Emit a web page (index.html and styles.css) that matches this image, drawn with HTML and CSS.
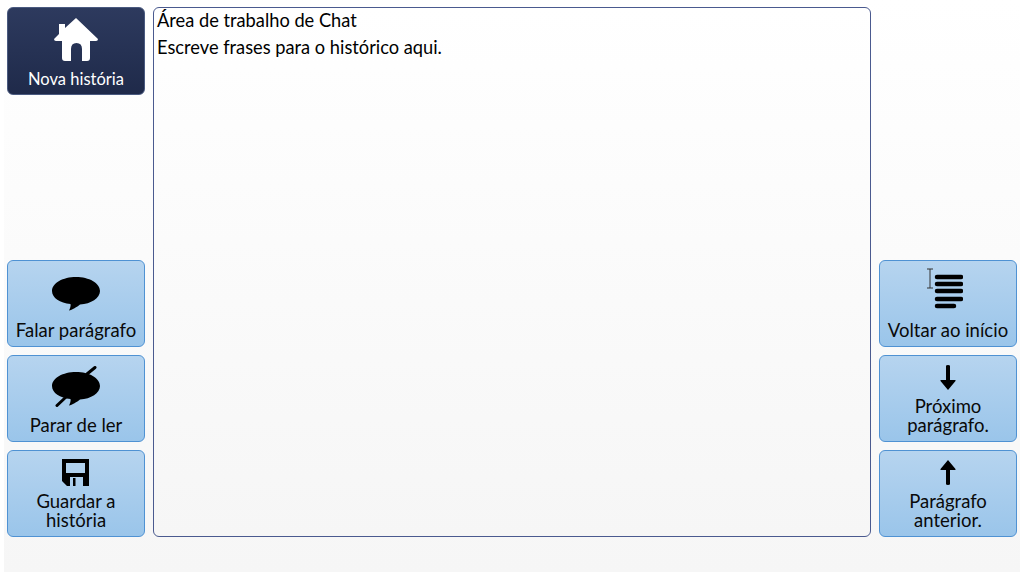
FILE: index.html
```html
<!DOCTYPE html>
<html lang="pt">
  <head>
    <meta charset="UTF-8" />
    <title>Área de trabalho de Chat</title>
    <link rel="stylesheet" href="styles.css">
  </head>
  <body>
    <div class="screen">
      <div class="side">
        <button class="btn btn-dark">
          <svg class="icon" width="44" height="44" viewBox="0 0 44 44">
            <path fill="#fff" d="M22 0 L44 21 Q44 23 42 23 H36 V40 Q36 43 33 43 H28 V31 Q28 25 22.500 25 Q17 25 17 31 V43 H11 Q8 43 8 40 V23 H2 Q0 23 0 21 L5 16 V6 H11 V10 Z"/>
          </svg>
          <span class="label">Nova história</span>
        </button>
        <div class="spacer"></div>
        <button class="btn btn-talk">
          <svg class="icon" width="48" height="34" viewBox="0 0 48 34">
            <path d="M24 0 C37 0 48 6 48 14 C48 21 39 27 28 27.500 C25 30 20 33 17 33.500 C18 31.500 19 29 18.500 27 C8 26 0 21 0 14 C0 6 11 0 24 0 Z"/>
          </svg>
          <span class="label">Falar parágrafo</span>
        </button>
        <button class="btn btn-stop">
          <svg class="icon" width="48" height="41" viewBox="0 0 48 41">
            <path d="M24 6 C37 6 48 12 48 20 C48 27 39 33 28 33.500 C25 36 20 39 17 39.500 C18 37.500 19 35 18.500 33 C8 32 0 27 0 20 C0 12 11 6 24 6 Z"/>
            <path d="M5 39.500 L14 31 M35 8 L43 1.500" stroke="#000" stroke-width="3" stroke-linecap="round"/>
          </svg>
          <span class="label">Parar de ler</span>
        </button>
        <button class="btn btn-two">
          <svg class="icon" width="28" height="28" viewBox="0 0 28 28">
            <path fill-rule="evenodd" d="M0 0 H27 V27 H21 V18 H8 V27 H5 L0 22 Z M4 4 V14 H23 V4 Z M11 19 H13.500 V27 H11 Z"/>
          </svg>
          <span class="label">Guardar a<br>história</span>
        </button>
      </div>

      <div class="chat">
        <p>Área de trabalho de Chat</p>
        <p>Escreve frases para o histórico aqui.</p>
      </div>

      <div class="side">
        <div class="spacer"></div>
        <button class="btn btn-top">
          <svg class="icon icon-left" width="36" height="42" viewBox="0 0 36 42">
            <path d="M0 1 H6 M3 1 V20 M0 20 H6" stroke="#333" stroke-width="1" fill="none"/>
            <path d="M10 9 H34 M10 16 H34 M10 23 H34 M10 31 H34 M10 38 H27" stroke="#000" stroke-width="4.500" stroke-linecap="round"/>
          </svg>
          <span class="label">Voltar ao início</span>
        </button>
        <button class="btn btn-arrow">
          <svg class="icon" width="16" height="26" viewBox="0 0 16 26">
            <path d="M6 1 Q6 0 8 0 Q10 0 10 1 V15 H15 Q16 15 15.500 16 L8 25 L0.500 16 Q0 15 1 15 H6 Z"/>
          </svg>
          <span class="label">Próximo<br>parágrafo.</span>
        </button>
        <button class="btn btn-arrow">
          <svg class="icon" width="16" height="26" viewBox="0 0 16 26">
            <path d="M6 24 Q6 25 8 25 Q10 25 10 24 V10 H15 Q16 10 15.500 9 L8 0 L0.500 9 Q0 10 1 10 H6 Z"/>
          </svg>
          <span class="label">Parágrafo<br>anterior.</span>
        </button>
      </div>
    </div>
  </body>
</html>
```

FILE: styles.css
```css
* {
  margin: 0;
  padding: 0;
  box-sizing: border-box;
  font-family: 'Lato', 'Noto Sans', sans-serif;
}
body {
  width: 1024px;
  height: 576px;
  background: #fff;
  padding: 0 4px 4px;
  overflow: hidden;
}
.screen {
  height: 572px;
  padding: 7px 3px 35px;
  background: linear-gradient(#fff, #f6f6f6);
  display: flex;
  gap: 8px;
}
.side {
  width: 138px;
  display: flex;
  flex-direction: column;
  gap: 8px;
}
.spacer {
  flex: 1;
}
.btn {
  width: 100%;
  height: 87px;
  flex-shrink: 0;
  border: 1px solid #4f92d3;
  border-radius: 6px;
  background: linear-gradient(#b6d4ef, #9ac5ea);
  color: #0a0a0a;
  display: flex;
  flex-direction: column;
  align-items: center;
}
.btn-dark {
  height: 88px;
  padding-top: 10px;
  border-color: #4a5a80;
  background: linear-gradient(#2d3a5e, #1f2a4a);
  color: #fff;
}
.btn-dark .label {
  padding-bottom: 5px;
  font-size: 16.500px;
}
.btn-talk {
  padding-top: 16px;
}
.btn-stop {
  padding-top: 10px;
}
.btn-two {
  padding-top: 8px;
}
.btn-top {
  padding-top: 7px;
}
.btn-arrow {
  padding-top: 9px;
}
.icon {
  display: block;
  flex-shrink: 0;
}
.icon-left {
  margin-left: -6px;
}
.label {
  margin-top: auto;
  padding-bottom: 6px;
  font-size: 18.500px;
  line-height: 19px;
  text-align: center;
}
.chat {
  flex: 1;
  padding: 1px 3px;
  border: 1px solid #4a5a8f;
  border-radius: 6px;
  background: linear-gradient(#fff, #f6f6f6);
  color: #000;
  font-size: 18.250px;
}
.chat p {
  line-height: 22px;
  margin-bottom: 5px;
}
```
